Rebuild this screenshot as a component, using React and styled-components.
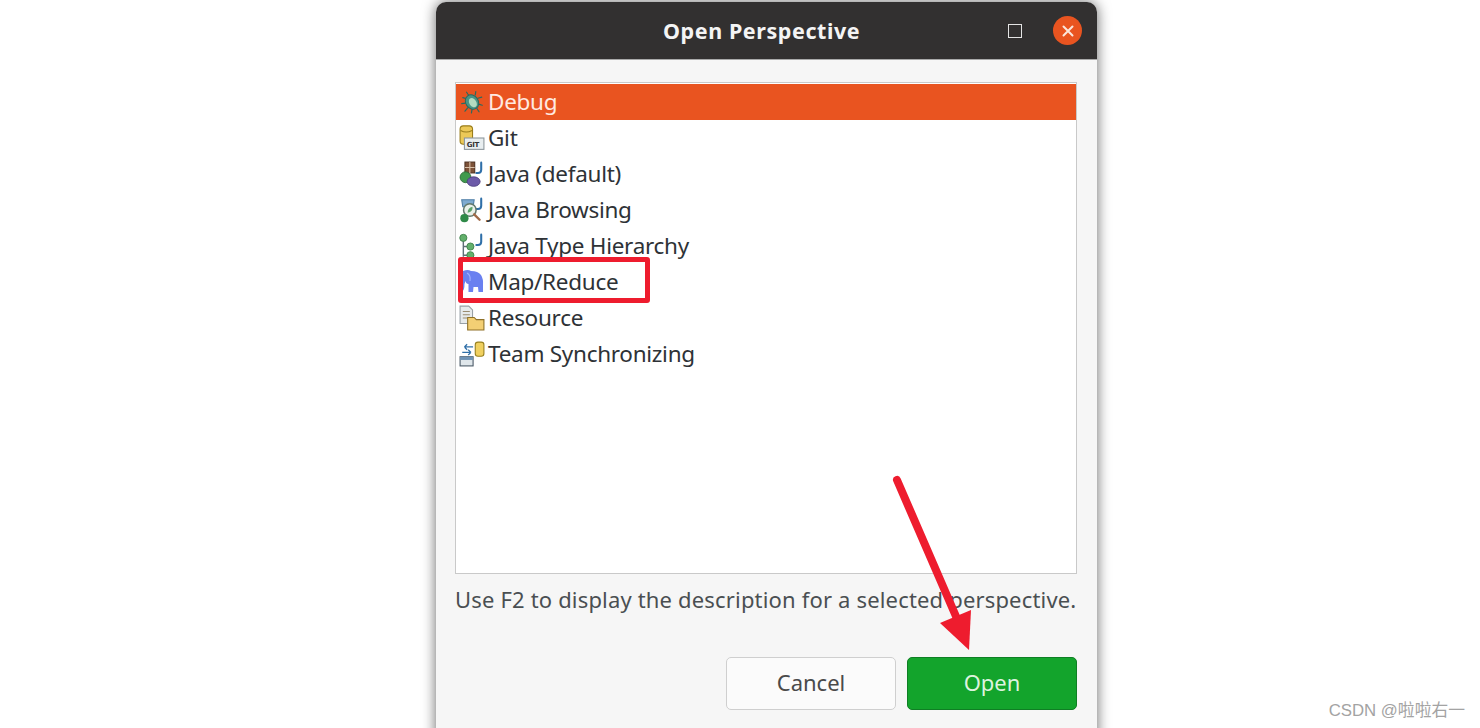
import styled, { createGlobalStyle } from 'styled-components';

const GlobalStyle = createGlobalStyle`
    html, body {
        margin: 0;
        padding: 0;
        background: #FFFFFF;
        overflow: hidden;
    }
`;

function BugIcon() {
    return (
        <svg width="24" height="24" viewBox="0 0 24 24">
            <g stroke="#2a6a60" strokeWidth="1.1" strokeLinecap="round">
                <path d="M9 6 L7 3 M15 5.5 L15.5 2.5 M7 9 L3.5 8 M17.5 8.5 L21 7.5 M6 13 L2.5 13.5 M18 14 L21.5 15 M8 17.5 L5.5 20.5 M16.5 18 L18.5 21 M12 19 L11.5 22" />
            </g>
            <ellipse cx="12" cy="12" rx="5.8" ry="7" transform="rotate(-35 12 12)" fill="#4a9486" stroke="#2a6a60" strokeWidth="0.9" />
            <ellipse cx="12.8" cy="12.6" rx="3.2" ry="4.6" transform="rotate(-35 12.8 12.6)" fill="#b4dcc0" />
        </svg>
    );
}

function GitIcon() {
    return (
        <svg width="24" height="24" viewBox="0 0 24 24">
            <rect x="1" y="0.8" width="11.5" height="17" rx="3" fill="#ecc957" stroke="#9a7e1c" strokeWidth="1" />
            <path d="M1.5 5 Q6.7 8 12 5" fill="none" stroke="#9a7e1c" strokeWidth="1" />
            <rect x="5" y="12" width="18" height="10.5" fill="#e8eef0" stroke="#8d979c" strokeWidth="1" />
            <text x="7.2" y="20" fontFamily="'DejaVu Sans', sans-serif" fontSize="6.5" fontWeight="700" fill="#333333">GIT</text>
        </svg>
    );
}

function JavaMark() {
    return <path d="M20.5 1.5 L20.5 8 Q20.5 11 17.5 11 L16 11" fill="none" stroke="#2f6fa8" strokeWidth="1.9" strokeLinecap="round" />;
}

function JavaIcon() {
    return (
        <svg width="24" height="24" viewBox="0 0 24 24">
            <JavaMark />
            <rect x="5.5" y="1" width="9" height="10" fill="#7d5238" stroke="#4f3222" strokeWidth="1" />
            <path d="M10 1 V11 M5.5 6 H14.5" stroke="#d8c0a8" strokeWidth="1" />
            <circle cx="6" cy="15" r="5" fill="#3f9a4d" stroke="#2b6a38" strokeWidth="0.8" />
            <ellipse cx="13.5" cy="19" rx="6" ry="4.4" fill="#6c5aa8" stroke="#4c3f80" strokeWidth="0.8" />
        </svg>
    );
}

function BrowsingIcon() {
    return (
        <svg width="24" height="24" viewBox="0 0 24 24">
            <JavaMark />
            <path d="M2.5 2.5 H14 L13 9 H3.5 Z" fill="#7fabd0" stroke="#4e7ea6" strokeWidth="1" />
            <circle cx="10" cy="12" r="5.8" fill="#e9f1ea" stroke="#63786c" strokeWidth="1.4" />
            <path d="M8 14.5 Q8 10 12.5 9 Q13 13.5 8 14.5 Z" fill="#5ea36a" />
            <path d="M14 16 L19 21" stroke="#a06a48" strokeWidth="2.2" strokeLinecap="round" />
            <circle cx="5" cy="19.5" r="3.8" fill="#2f8a48" />
        </svg>
    );
}

function HierarchyIcon() {
    return (
        <svg width="24" height="24" viewBox="0 0 24 24">
            <JavaMark />
            <path d="M4 5 V22 M4 12.5 H8 M4 20.5 H8" fill="none" stroke="#5f6f77" strokeWidth="1.3" />
            <circle cx="4" cy="4.5" r="3.3" fill="#63b06c" stroke="#3c7f48" strokeWidth="0.8" />
            <circle cx="10.5" cy="12.5" r="3.3" fill="#63b06c" stroke="#3c7f48" strokeWidth="0.8" />
            <circle cx="10.5" cy="20.5" r="3.3" fill="#63b06c" stroke="#3c7f48" strokeWidth="0.8" />
        </svg>
    );
}

function ElephantIcon() {
    return (
        <svg width="24" height="26" viewBox="0 0 24 26">
            <path d="M3 2 Q8 0 11 2 Q18 2 21 6 Q23.5 10 23 16 L23 23 L18.5 23 L18 18 L13.5 18 L13 23 L8.5 23 L8.5 15 Q6 15 5.5 12 L4.5 15 Q4.5 21 2.5 22 Q0.5 22 1 19 Q2 15 1 10 Q0 5 3 2 Z" fill="#6a80f0" />
            <path d="M7 4 Q11 6 10 12" fill="none" stroke="#9fb0ff" strokeWidth="1.1" />
        </svg>
    );
}

function ResourceIcon() {
    return (
        <svg width="24" height="24" viewBox="0 0 24 24">
            <path d="M1 1 H9 L12.5 4.5 V17 H1 Z" fill="#e6eaec" stroke="#98a0a6" strokeWidth="1" />
            <path d="M3.5 6 H10 M3.5 9 H10 M3.5 12 H8" stroke="#9a8c70" strokeWidth="1.1" />
            <path d="M8 11.5 H14 L16 13.5 H23 V23 H8 Z" fill="#f3cf74" stroke="#8f7128" strokeWidth="1" />
        </svg>
    );
}

function SyncIcon() {
    return (
        <svg width="24" height="24" viewBox="0 0 24 24">
            <rect x="15" y="1" width="8" height="13" rx="2.5" fill="#f0d060" stroke="#98801f" strokeWidth="1" />
            <path d="M5 5.5 H13 M5 5.5 L7.5 3 M5 5.5 L7.5 8 M3 10.5 H11 M11 10.5 L8.5 8 M11 10.5 L8.5 13" fill="none" stroke="#2f6fa8" strokeWidth="1.2" />
            <rect x="1" y="14.5" width="12" height="8.5" fill="#dfe6ea" stroke="#4b5a66" strokeWidth="1" />
            <rect x="1" y="14.5" width="12" height="3" fill="#6f93b5" />
        </svg>
    );
}

const perspectives = [
    { name: 'Debug', icon: <BugIcon /> },
    { name: 'Git', icon: <GitIcon /> },
    { name: 'Java (default)', icon: <JavaIcon /> },
    { name: 'Java Browsing', icon: <BrowsingIcon /> },
    { name: 'Java Type Hierarchy', icon: <HierarchyIcon /> },
    { name: 'Map/Reduce', icon: <ElephantIcon /> },
    { name: 'Resource', icon: <ResourceIcon /> },
    { name: 'Team Synchronizing', icon: <SyncIcon /> },
];

export default function App() {
    return (
        <Page>
            <GlobalStyle />
            <Dialog>
                <TitleBar>
                    <Title>Open Perspective</Title>
                    <MaximizeButton />
                    <CloseButton>
                        <svg width="14" height="14" viewBox="0 0 14 14">
                            <path d="M2.5 2.5 L11.5 11.5 M11.5 2.5 L2.5 11.5" stroke="#FBE6DC" strokeWidth="2" strokeLinecap="round" />
                        </svg>
                    </CloseButton>
                </TitleBar>
                <Content>
                    <PerspectiveList>
                        {perspectives.map((item, index) => (
                            <Row key={item.name} selected={index === 0}>
                                <RowIcon>{item.icon}</RowIcon>
                                <span>{item.name}</span>
                            </Row>
                        ))}
                        <Highlight />
                    </PerspectiveList>
                    <Hint>Use F2 to display the description for a selected perspective.</Hint>
                    <Buttons>
                        <CancelButton>Cancel</CancelButton>
                        <OpenButton>Open</OpenButton>
                    </Buttons>
                </Content>
                <Arrow width="100" height="190" viewBox="0 0 100 190">
                    <path d="M5 5 L66 146" stroke="#EE1C2E" strokeWidth="8" strokeLinecap="round" fill="none" />
                    <path d="M77 175 L48 148 L79 135 Z" fill="#EE1C2E" />
                </Arrow>
            </Dialog>
            <Watermark>CSDN @啦啦右一</Watermark>
        </Page>
    );
}

const Page = styled.div`
    position: relative;
    width: 1480px;
    height: 728px;
    padding: 2px 0 0 436px;
    box-sizing: border-box;
    overflow: hidden;
    background: #FFFFFF;
`;

const Dialog = styled.div`
    position: relative;
    width: 661px;
    height: 740px;
    display: flex;
    flex-direction: column;
    background: #F6F6F6;
    border-radius: 10px 10px 0 0;
    box-shadow: 0 0 14px rgba(0, 0, 0, 0.6);
`;

const TitleBar = styled.div`
    height: 58px;
    flex-shrink: 0;
    display: flex;
    align-items: center;
    position: relative;
    background: #323030;
    border-radius: 10px 10px 0 0;
    border-bottom: 1px solid #A9A9A9;
    box-sizing: border-box;
    padding-left: 572px;
`;

const Title = styled.div`
    position: absolute;
    left: 227px;
    top: 15px;
    color: #F4F4F4;
    font: 700 21.5px/28px "Noto Sans", sans-serif;
    letter-spacing: 0.58px;
    white-space: nowrap;
`;

const MaximizeButton = styled.div`
    width: 12px;
    height: 12px;
    border: 1.5px solid #E4E4E4;
    box-sizing: content-box;
`;

const CloseButton = styled.div`
    width: 29px;
    height: 29px;
    margin-left: 31px;
    border-radius: 50%;
    background: #E95420;
    display: flex;
    align-items: center;
    justify-content: center;
`;

const Content = styled.div`
    display: flex;
    flex-direction: column;
    padding: 22px 20px 0 19px;
`;

const PerspectiveList = styled.div`
    position: relative;
    height: 492px;
    box-sizing: border-box;
    padding: 1px 0;
    background: #FFFFFF;
    border: 1px solid #C9C9C9;
`;

const Row = styled.div`
    height: 36px;
    display: flex;
    align-items: center;
    gap: 3px;
    padding-left: 3px;
    color: ${(props) => (props.selected ? '#FFE9E0' : '#2E3236')};
    background: ${(props) => (props.selected ? '#E95420' : 'transparent')};
    font: 400 22.5px/36px "Noto Sans", sans-serif;
    letter-spacing: -0.28px;
    white-space: nowrap;
`;

const RowIcon = styled.span`
    width: 26px;
    height: 26px;
    display: flex;
    align-items: center;
    justify-content: center;

    svg {
        width: 26px;
        height: 26px;
    }
`;

const Highlight = styled.div`
    position: absolute;
    left: 2px;
    top: 174px;
    width: 192px;
    height: 46px;
    box-sizing: border-box;
    border: 5px solid #EE1C2E;
    border-radius: 3px;
`;

const Hint = styled.div`
    margin-top: 10px;
    color: #4A4F52;
    font: 400 22px/30px "Noto Sans", sans-serif;
    letter-spacing: 0.17px;
    white-space: nowrap;
`;

const Buttons = styled.div`
    display: flex;
    justify-content: flex-end;
    gap: 11px;
    margin-top: 43px;
`;

const CancelButton = styled.button`
    width: 170px;
    height: 53px;
    padding: 0 0 3px;
    background: #FBFBFB;
    border: 1.5px solid #CFCFCF;
    border-radius: 5px;
    color: #4A4A4A;
    font: 400 22px "Noto Sans", sans-serif;
`;

const OpenButton = styled.button`
    width: 170px;
    height: 53px;
    padding: 0 0 3px;
    background: #13A42C;
    border: 1.5px solid #0F7F24;
    border-radius: 5px;
    color: #DDF3DF;
    font: 400 22px "Noto Sans", sans-serif;
`;

const Arrow = styled.svg`
    position: absolute;
    left: 456px;
    top: 473px;
`;

const Watermark = styled.div`
    position: absolute;
    right: 15px;
    top: 699px;
    color: #A3A3A3;
    font: 400 16.8px/24px "Liberation Sans", "Noto Sans CJK SC", sans-serif;
    white-space: nowrap;
`;
